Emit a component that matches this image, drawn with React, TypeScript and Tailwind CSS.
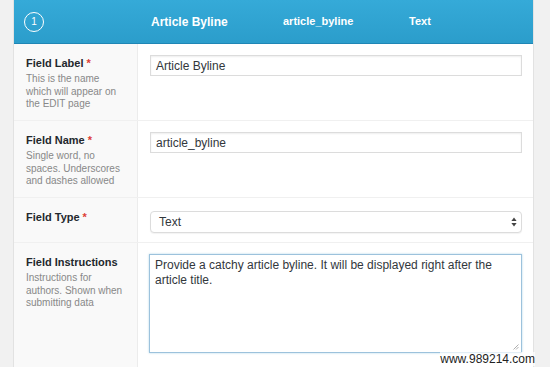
import React from "react";

const rows = [
  {
    label: "Field Label",
    required: true,
    help: "This is the name which will appear on the EDIT page",
    kind: "input",
    value: "Article Byline",
    height: "h-[77px]",
  },
  {
    label: "Field Name",
    required: true,
    help: "Single word, no spaces. Underscores and dashes allowed",
    kind: "input",
    value: "article_byline",
    height: "h-[77px]",
  },
  {
    label: "Field Type",
    required: true,
    help: "",
    kind: "select",
    value: "Text",
    height: "h-[45px]",
  },
  {
    label: "Field Instructions",
    required: false,
    help: "Instructions for authors. Shown when submitting data",
    kind: "textarea",
    value: "Provide a catchy article byline. It will be displayed right after the article title.",
    height: "h-[130px]",
  },
];

function SelectArrows() {
  return (
    <svg width="6" height="10" viewBox="0 0 6 10" className="text-[#444]">
      <path d="M3 0.5 L5.6 4 H0.4 Z" fill="currentColor" />
      <path d="M3 9.5 L5.6 6 H0.4 Z" fill="currentColor" />
    </svg>
  );
}

export default function App() {
  return (
    <div
      className="relative h-[367px] w-[550px] overflow-hidden bg-[#f1f1f1]"
      style={{ fontFamily: '"Liberation Sans", Arial, sans-serif' }}
    >
      <div className="ml-[13px] w-[521px] border-x border-[#e2e2e2] bg-white">
        {/* header bar */}
        <div className="flex h-[44px] items-center border-b border-[#1f86b5] bg-gradient-to-b from-[#35aad8] to-[#2b9dcb] text-white">
          <div className="flex w-[124px] items-center pl-[10px]">
            <span className="flex h-[20px] w-[20px] items-center justify-center rounded-full border-[1.5px] border-white text-[10px]">
              1
            </span>
          </div>
          <div className="w-[132px] pl-[13px] text-[12px] font-bold">Article Byline</div>
          <div className="w-[129px] pl-[13px] text-[11px] font-semibold">article_byline</div>
          <div className="pl-[10px] text-[11px] font-semibold">Text</div>
        </div>

        {rows.map((row) => (
          <div key={row.label} className={`flex border-b border-[#f0f0f0] ${row.height}`}>
            <div className="w-[124px] shrink-0 border-r border-[#ececec] bg-[#f9f9f9] pl-[12px] pt-[12px]">
              <div className="text-[11px] font-bold leading-[14px] text-[#23282d]">
                {row.label}
                {row.required && <span className="ml-[3px] text-[#dd3d36]">*</span>}
              </div>
              {row.help && (
                <p className="mt-[3px] w-[100px] text-[10px] leading-[12.5px] text-[#888]">{row.help}</p>
              )}
            </div>
            <div className="flex-1 pl-[12px] pr-[11px] pt-[11px]">
              {row.kind === "input" && (
                <div className="flex h-[21px] items-center border border-[#dcdcdc] bg-white pl-[5px] text-[12px] text-[#32373c] shadow-[inset_0_1px_2px_rgba(0,0,0,0.07)]">
                  {row.value}
                </div>
              )}
              {row.kind === "select" && (
                <div className="mt-[2px] flex h-[22px] items-center justify-between rounded-[4px] border border-[#dcdcdc] bg-white pl-[8px] pr-[4px] text-[12px] text-[#32373c] shadow-[0_1px_1px_rgba(0,0,0,0.05)]">
                  <span>{row.value}</span>
                  <SelectArrows />
                </div>
              )}
              {row.kind === "textarea" && (
                <div className="relative -ml-[1px] h-[99px] border border-[#9cc2dc] bg-white px-[5px] pt-[3px] text-[12px] leading-[15px] text-[#32373c] shadow-[0_0_2px_rgba(30,140,190,0.35)]">
                  {row.value}
                  <svg width="6" height="6" viewBox="0 0 6 6" className="absolute bottom-[2px] right-[2px]">
                    <path d="M0.5 5.5 L5.5 0.5 M3 5.5 L5.5 3" stroke="#999" strokeWidth="0.8" />
                  </svg>
                </div>
              )}
            </div>
          </div>
        ))}
      </div>
      <div className="absolute bottom-[1px] right-[15px] bg-white/70 text-[12px] leading-[14px] text-[#222]">
        www.989214.com
      </div>
    </div>
  );
}
